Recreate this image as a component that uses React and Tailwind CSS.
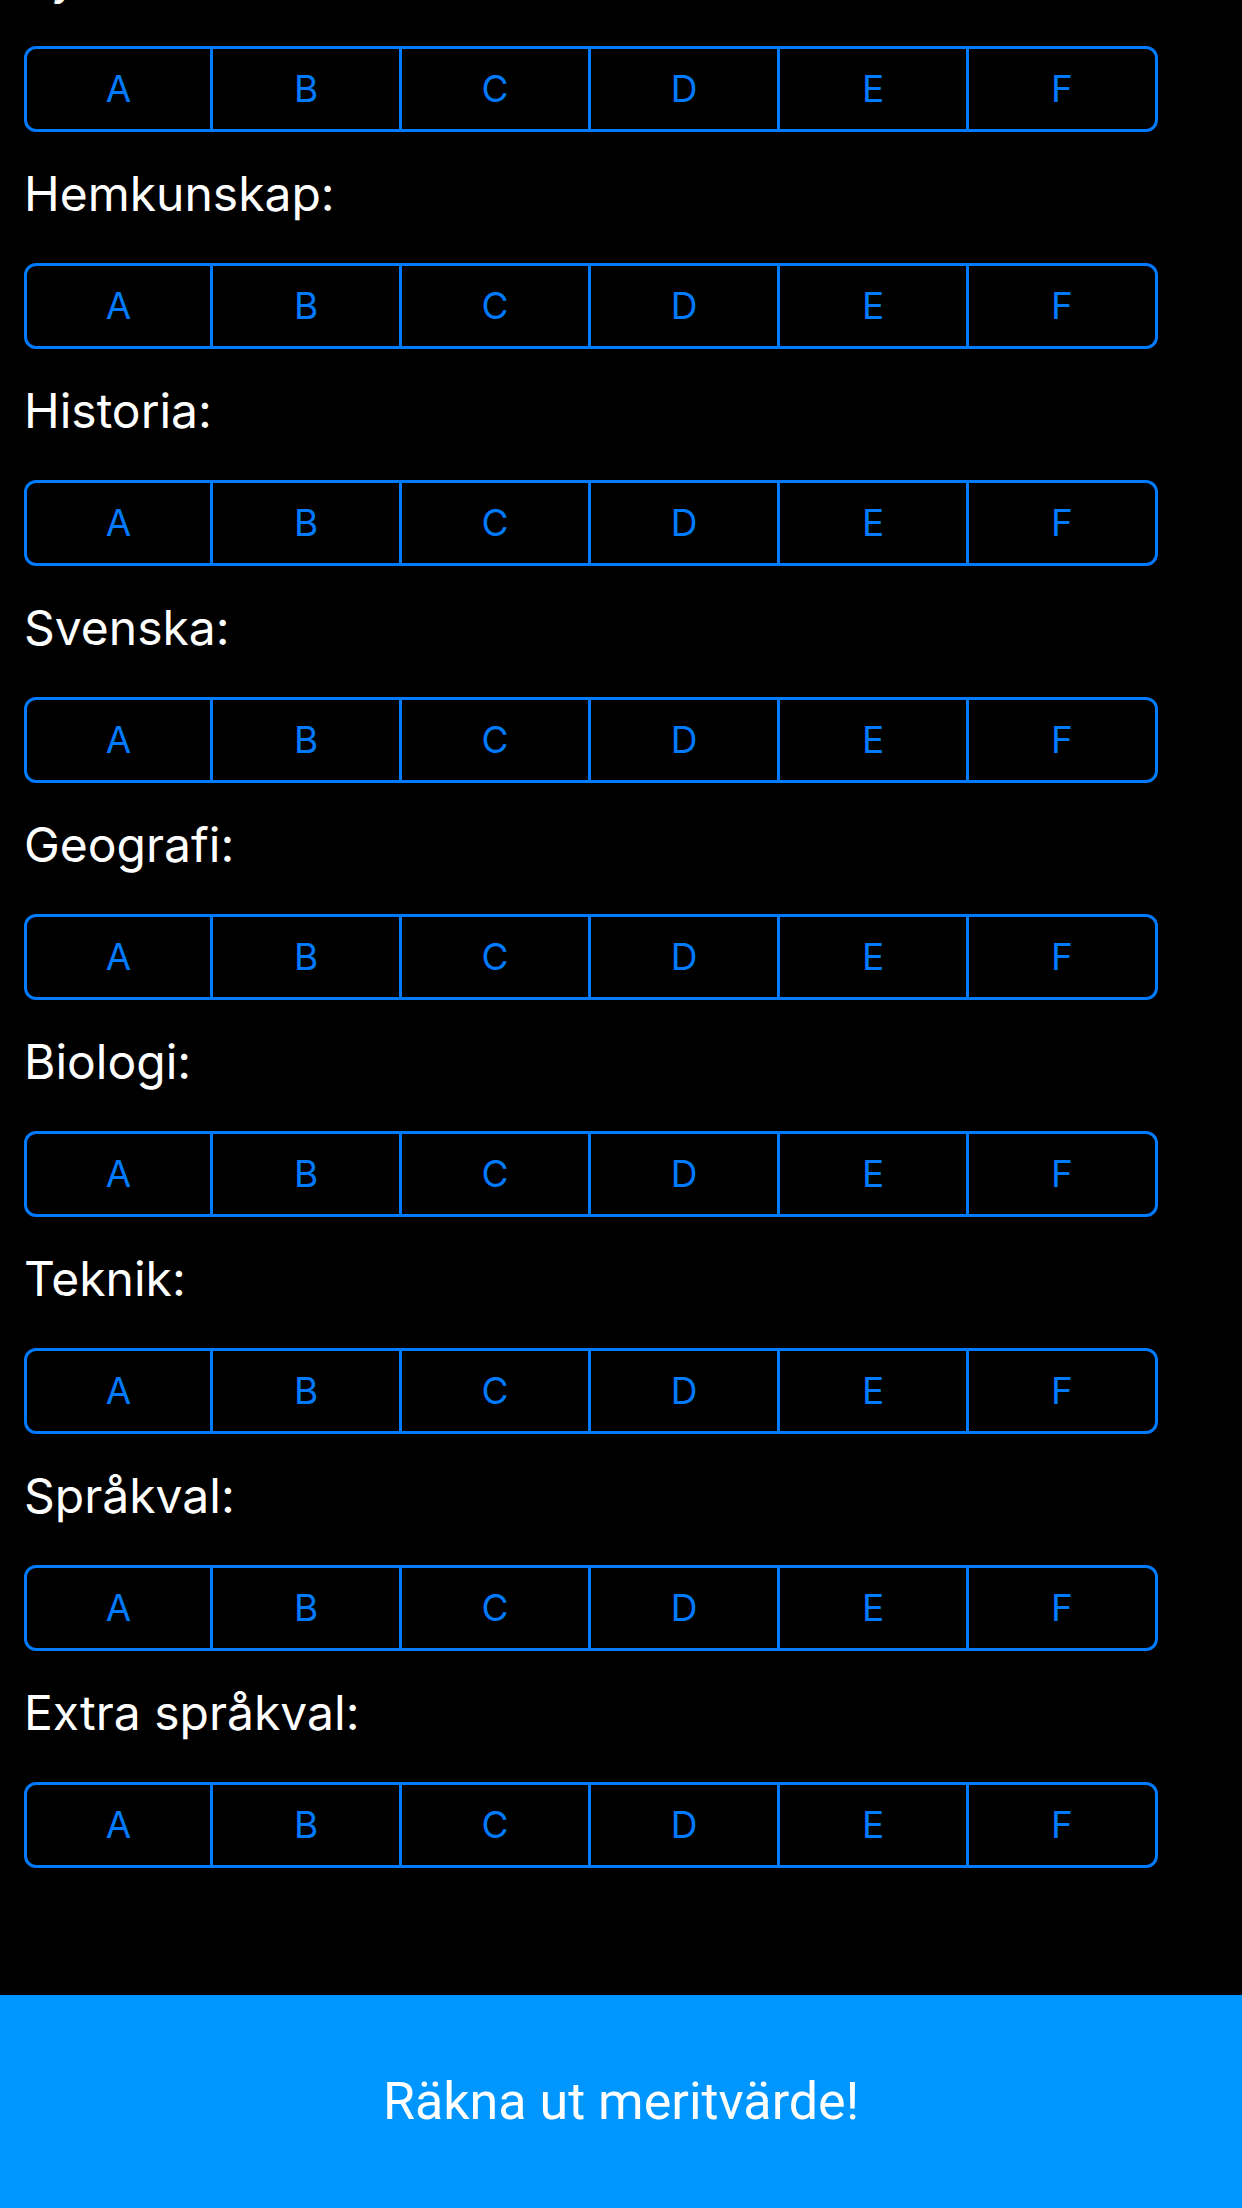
import React from 'react';

const grades = ['A', 'B', 'C', 'D', 'E', 'F'];

const subjects = [
  'Fysik:',
  'Hemkunskap:',
  'Historia:',
  'Svenska:',
  'Geografi:',
  'Biologi:',
  'Teknik:',
  'Språkval:',
  'Extra språkval:',
];

// segment widths, dividers drawn on the right edge
const segClass = [
  'w-[186px] border-r-[3px]',
  'w-[189px] border-r-[3px]',
  'w-[189px] border-r-[3px]',
  'w-[189px] border-r-[3px]',
  'w-[189px] border-r-[3px]',
  'flex-1',
];

const GradePicker = () => (
  <div className="flex h-[86px] w-[1134px] rounded-[12px] border-[3px] border-[#007AFF] overflow-hidden">
    {grades.map((g, i) => (
      <button
        key={g}
        className={`${segClass[i]} shrink-0 border-[#007AFF] flex items-center justify-center text-[37px] text-[#007AFF]`}
        style={{ fontFamily: 'Inter, "Noto Sans", sans-serif' }}
      >
        {g}
      </button>
    ))}
  </div>
);

export default function App() {
  return (
    <div className="w-[1242px] h-[2208px] bg-black flex flex-col overflow-hidden">
      {/* scrolled list of subjects */}
      <div className="flex-1 overflow-hidden">
        <div className="-mt-[85px] px-[24px] flex flex-col">
          {subjects.map((s) => (
            <div key={s} className="flex flex-col">
              <div
                className="h-[131px] pt-[38px] text-[48px] leading-[48px] text-white"
                style={{ fontFamily: 'Inter, "Noto Sans", sans-serif' }}
              >
                {s}
              </div>
              <GradePicker />
            </div>
          ))}
        </div>
      </div>

      {/* Calculate button */}
      <button
        className="h-[213px] w-full shrink-0 bg-[#0096FF] flex items-center justify-center text-white text-[52px]"
        style={{ fontFamily: 'Roboto, "Noto Sans", sans-serif' }}
      >
        Räkna ut meritvärde!
      </button>
    </div>
  );
}
